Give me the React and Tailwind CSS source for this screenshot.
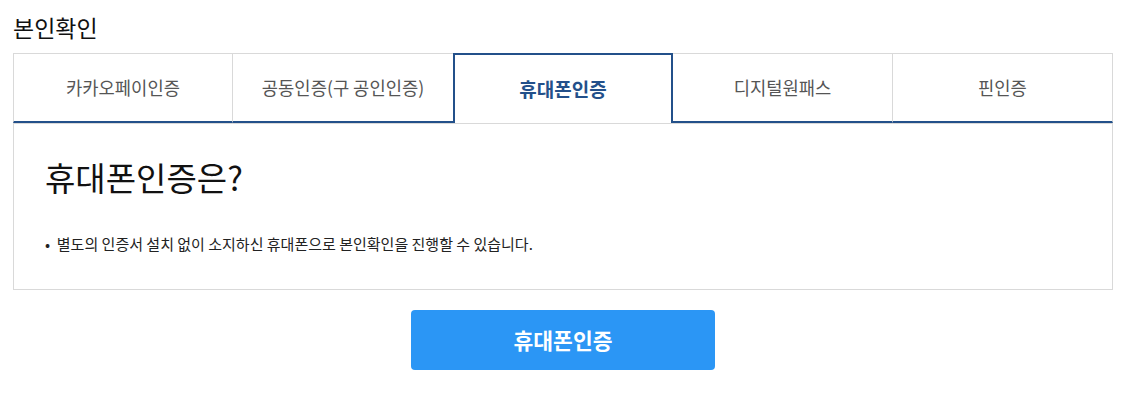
export default function App() {
  const tabs = ["카카오페이인증", "공동인증(구 공인인증)", "휴대폰인증", "디지털원패스", "핀인증"];
  const active = 2;
  return (
    <div className="w-[1133px] h-[400px] bg-white" style={{ fontFamily: '"Noto Sans CJK KR", "Noto Sans", sans-serif' }}>
      <div className="ml-[13px] w-[1100px]">
        <h2 className="pt-[12px] mb-[11px] text-[23px] leading-[30px] text-[#111] font-normal">본인확인</h2>
        <div className="flex">
          {tabs.map((t, i) =>
            i === active ? (
              <div key={t} className="w-[220px] h-[70px] flex items-center justify-center border-2 border-b-0 border-[#23508a] bg-white text-[19px] font-bold text-[#23508a]">
                {t}
              </div>
            ) : (
              <div
                key={t}
                className={
                  i === 0
                    ? "w-[220px] h-[70px] flex items-center justify-center border-t border-l border-r border-[#d9d9d9] border-b-2 border-b-[#23508a] text-[17.7px] text-[#555]"
                    : i === active - 1
                    ? "w-[220px] h-[70px] flex items-center justify-center border-t border-[#d9d9d9] border-b-2 border-b-[#23508a] text-[17.7px] text-[#555]"
                    : "w-[220px] h-[70px] flex items-center justify-center border-t border-r border-[#d9d9d9] border-b-2 border-b-[#23508a] text-[17.7px] text-[#555]"
                }
              >
                {t}
              </div>
            )
          )}
        </div>
        <div className="border border-[#d9d9d9] h-[167px] pl-[31px] pt-[30px]">
          <h3 className="text-[33px] leading-[46px] font-normal text-[#111]">휴대폰인증은?</h3>
          <p className="mt-[34px] text-[15px] leading-[20px] text-[#222]">• &nbsp;별도의 인증서 설치 없이 소지하신 휴대폰으로 본인확인을 진행할 수 있습니다.</p>
        </div>
        <div className="flex justify-center mt-[20px]">
          <button className="w-[304px] h-[60px] rounded-[4px] bg-[#2b96f5] text-white text-[21.5px] font-bold">휴대폰인증</button>
        </div>
      </div>
    </div>
  );
}
